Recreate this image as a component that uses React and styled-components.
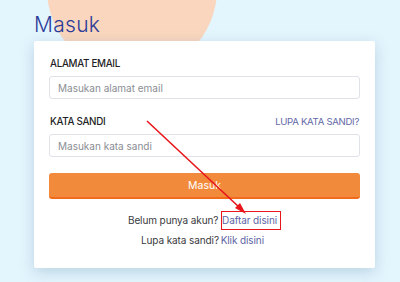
import React from "react";
import styled, { createGlobalStyle } from "styled-components";

const GlobalStyle = createGlobalStyle`
  html, body {
    margin: 0;
    padding: 0;
    background: #e3f5fd;
    font-family: "Inter", "Noto Sans", sans-serif;
    overflow: hidden;
  }
`;

const Page = styled.div`
  position: relative;
  width: 400px;
  height: 282px;
  padding: 13px 0 0 34px;
  box-sizing: border-box;
  overflow: hidden;
`;

const Blob = styled.div`
  position: absolute;
  left: 47px;
  top: -96px;
  width: 170px;
  height: 170px;
  border-radius: 50%;
  background: #f9d6bd;
`;

const Title = styled.h1`
  position: relative;
  margin: 0 0 4px;
  font-size: 21px;
  font-weight: 300;
  line-height: 24px;
  color: #2c3b98;
  letter-spacing: 0.3px;
`;

const Card = styled.div`
  position: relative;
  width: 341px;
  height: 227px;
  box-sizing: border-box;
  padding: 16px 15px 0 15px;
  background: #fff;
  border-radius: 2px;
  box-shadow: 0 4px 14px rgba(110, 150, 180, 0.35);
`;

const Field = styled.div`
  display: flex;
  flex-direction: column;
  gap: 5px;
  margin-bottom: ${(p) => p.$gap || 0}px;
`;

const LabelRow = styled.div`
  display: flex;
  justify-content: space-between;
  align-items: center;
  padding: 0 1px;
`;

const Label = styled.span`
  font-size: 9.8px;
  font-weight: 500;
  color: #1e1e24;
  line-height: 14px;
  letter-spacing: -0.3px;
`;

const SideLink = styled.a`
  font-size: 9.6px;
  color: #6369a6;
  line-height: 14px;
  text-decoration: none;
  letter-spacing: -0.3px;
`;

const Input = styled.input`
  height: 23px;
  box-sizing: border-box;
  width: 100%;
  border: 1px solid #dfe2e8;
  border-radius: 3px;
  padding: 0 8px;
  font-family: inherit;
  font-size: 10px;
  color: #333;
  outline: none;
  &::placeholder {
    color: #8a8d93;
  }
`;

const Button = styled.button`
  width: 100%;
  height: 26px;
  margin-top: 16px;
  border: none;
  border-bottom: 2px solid #f26a1b;
  border-radius: 3px;
  background: #f28a3c;
  color: #fff;
  font-family: inherit;
  font-size: 10.5px;
  font-weight: 400;
`;

const Links = styled.div`
  display: flex;
  flex-direction: column;
  align-items: center;
  gap: 1px;
  margin-top: 12px;
  font-size: 10px;
  color: #3a3a40;
  line-height: 17px;
  letter-spacing: -0.1px;
`;

const Line = styled.div`
  display: flex;
  align-items: center;
`;

const Link = styled.a`
  color: #5d65a6;
  text-decoration: none;
  padding: 0 3px 0 0;
  border: ${(p) => (p.$boxed ? "1.5px solid #e8151b" : "1.5px solid transparent")};
  margin-left: ${(p) => (p.$boxed ? 0 : -2)}px;
`;

const Arrow = styled.svg`
  position: absolute;
  left: 0;
  top: 0;
  pointer-events: none;
`;

export default function App() {
  return (
    <>
      <GlobalStyle />
      <Page>
        <Blob />
        <Title>Masuk</Title>
        <Card>
          <Field $gap={16}>
            <LabelRow>
              <Label>ALAMAT EMAIL</Label>
            </LabelRow>
            <Input placeholder="Masukan alamat email" />
          </Field>
          <Field>
            <LabelRow>
              <Label>KATA SANDI</Label>
              <SideLink>LUPA KATA SANDI?</SideLink>
            </LabelRow>
            <Input placeholder="Masukan kata sandi" />
          </Field>
          <Button>Masuk</Button>
          <Links>
            <Line>
              Belum punya akun?&nbsp;<Link $boxed>Daftar disini</Link>
            </Line>
            <Line>
              Lupa kata sandi?&nbsp;<Link>Klik disini</Link>
            </Line>
          </Links>
        </Card>
        <Arrow width="400" height="282" viewBox="0 0 400 282">
          <line x1="147" y1="121" x2="240" y2="208" stroke="#e8151b" strokeWidth="1.6" />
          <polygon points="246,214 235,208 240,203" fill="#e8151b" />
        </Arrow>
      </Page>
    </>
  );
}
